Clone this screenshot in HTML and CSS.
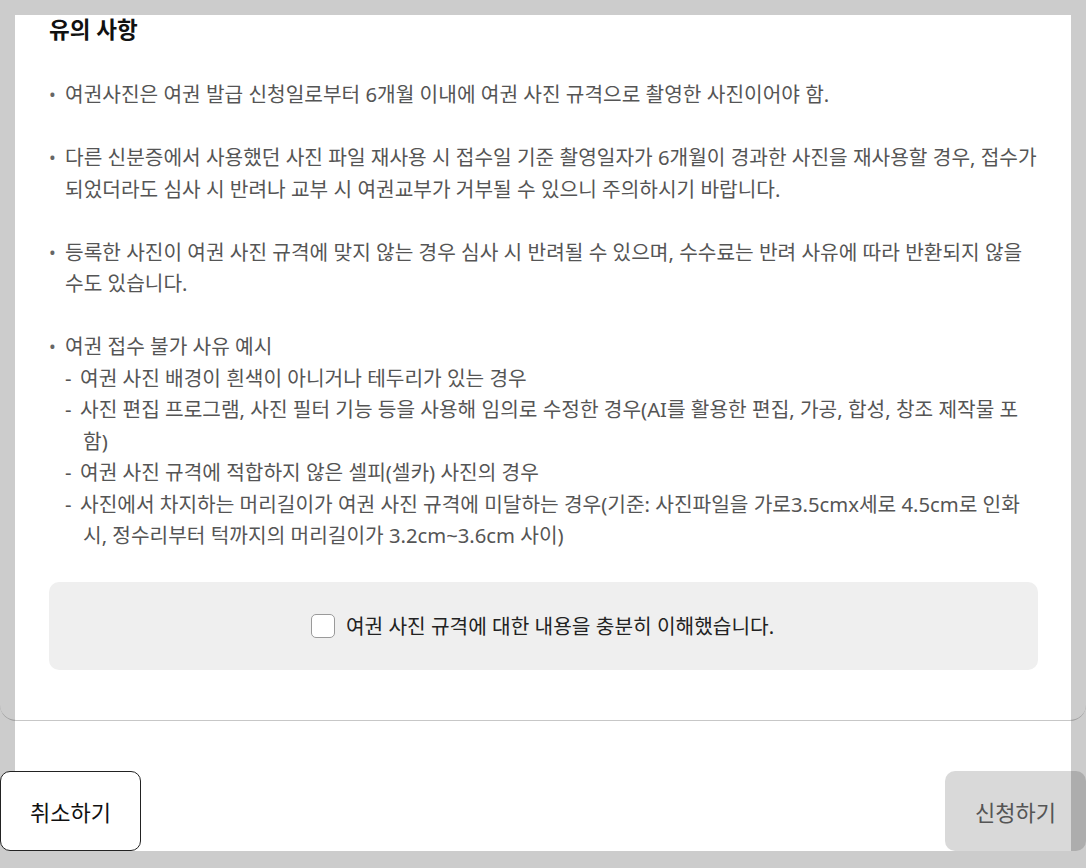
FILE: index.html
```html
<!DOCTYPE html>
<html lang="ko">
<head>
<meta charset="utf-8">
<title>유의 사항</title>
<link rel="stylesheet" href="styles.css">
</head>
<body>
<div class="modal">
  <div class="scroll">
    <h2 class="title">유의 사항</h2>
    <ul class="notes">
      <li class="note"><span class="dot">•</span><div class="note-text">여권사진은 여권 발급 신청일로부터 6개월 이내에 여권 사진 규격으로 촬영한 사진이어야 함.</div></li>
      <li class="note"><span class="dot">•</span><div class="note-text">다른 신분증에서 사용했던 사진 파일 재사용 시 접수일 기준 촬영일자가 6개월이 경과한 사진을 재사용할 경우, 접수가 되었더라도 심사 시 반려나 교부 시 여권교부가 거부될 수 있으니 주의하시기 바랍니다.</div></li>
      <li class="note"><span class="dot">•</span><div class="note-text">등록한 사진이 여권 사진 규격에 맞지 않는 경우 심사 시 반려될 수 있으며, 수수료는 반려 사유에 따라 반환되지 않을 수도 있습니다.</div></li>
      <li class="note"><span class="dot">•</span><div class="note-text">여권 접수 불가 사유 예시
        <div class="sub"><span class="dash">-</span>여권 사진 배경이 흰색이 아니거나 테두리가 있는 경우</div>
        <div class="sub"><span class="dash">-</span>사진 편집 프로그램, 사진 필터 기능 등을 사용해 임의로 수정한 경우(AI를 활용한 편집, 가공, 합성, 창조 제작물 포함)</div>
        <div class="sub"><span class="dash">-</span>여권 사진 규격에 적합하지 않은 셀피(셀카) 사진의 경우</div>
        <div class="sub"><span class="dash">-</span>사진에서 차지하는 머리길이가 여권 사진 규격에 미달하는 경우(기준: 사진파일을 가로3.5cmx세로 4.5cm로 인화 시, 정수리부터 턱까지의 머리길이가 3.2cm~3.6cm 사이)</div>
      </div></li>
    </ul>
    <label class="agree">
      <input type="checkbox" class="agree-box">
      <span class="agree-text">여권 사진 규격에 대한 내용을 충분히 이해했습니다.</span>
    </label>
  </div>
  <div class="footer">
    <button class="btn btn-cancel" type="button">취소하기</button>
    <button class="btn btn-submit" type="button" disabled>신청하기</button>
  </div>
</div>
</body>
</html>
```

FILE: styles.css
```css
* { box-sizing: border-box; }
html, body { margin: 0; padding: 0; }
body {
  background: #cccccc;
  font-family: "Noto Sans", "Noto Sans CJK KR", sans-serif;
  width: 1086px;
  height: 868px;
  overflow: hidden;
}
.modal {
  margin: 15px 15px 0 15px;
  height: 836px;
  background: #ffffff;
  display: flex;
  flex-direction: column;
}
.scroll {
  margin: 0 -15px;
  height: 706px;
  padding: 0 48px 0 49px;
  border-bottom: 1px solid rgba(0, 0, 0, 0.22);
  border-radius: 0 0 16px 16px;
  display: flex;
  flex-direction: column;
}
.title {
  margin: 0;
  font-size: 22.5px;
  line-height: 30px;
  font-weight: 700;
  color: #111111;
}
.notes {
  list-style: none;
  margin: 34px 0 0 0;
  padding: 0;
  font-size: 20.25px;
  line-height: 31.5px;
  color: #555555;
}
.note {
  display: flex;
}
.note + .note { margin-top: 31.5px; }
.dot {
  width: 16px;
  flex: none;
  font-size: 18px;
  color: #666666;
}
.note-text { flex: 1; }
.sub {
  padding-left: 18px;
  text-indent: -18px;
}
.dash {
  display: inline-block;
  width: 15px;
  text-indent: 0;
}
.agree {
  margin-top: 30px;
  height: 88px;
  background: #efefef;
  border-radius: 10px;
  display: flex;
  align-items: center;
  justify-content: center;
  gap: 11px;
  padding-right: 2px;
}
.agree-box {
  appearance: none;
  -webkit-appearance: none;
  margin: 0;
  width: 24px;
  height: 24px;
  border: 1px solid #9a9a9a;
  border-radius: 5px;
  background: #ffffff;
}
.agree-text {
  font-size: 20.25px;
  color: #222222;
}
.footer {
  margin: 50px -15px 0 -15px;
  display: flex;
  justify-content: space-between;
}
.btn {
  width: 141px;
  height: 80px;
  border-radius: 10px;
  font-family: "Noto Sans", "Noto Sans CJK KR", sans-serif;
  font-size: 22px;
  padding: 0;
}
.btn-cancel {
  background: #ffffff;
  border: 1px solid #222222;
  color: #111111;
}
.btn-submit {
  background: rgba(0, 0, 0, 0.15);
  border: none;
  color: #555555;
}
```
